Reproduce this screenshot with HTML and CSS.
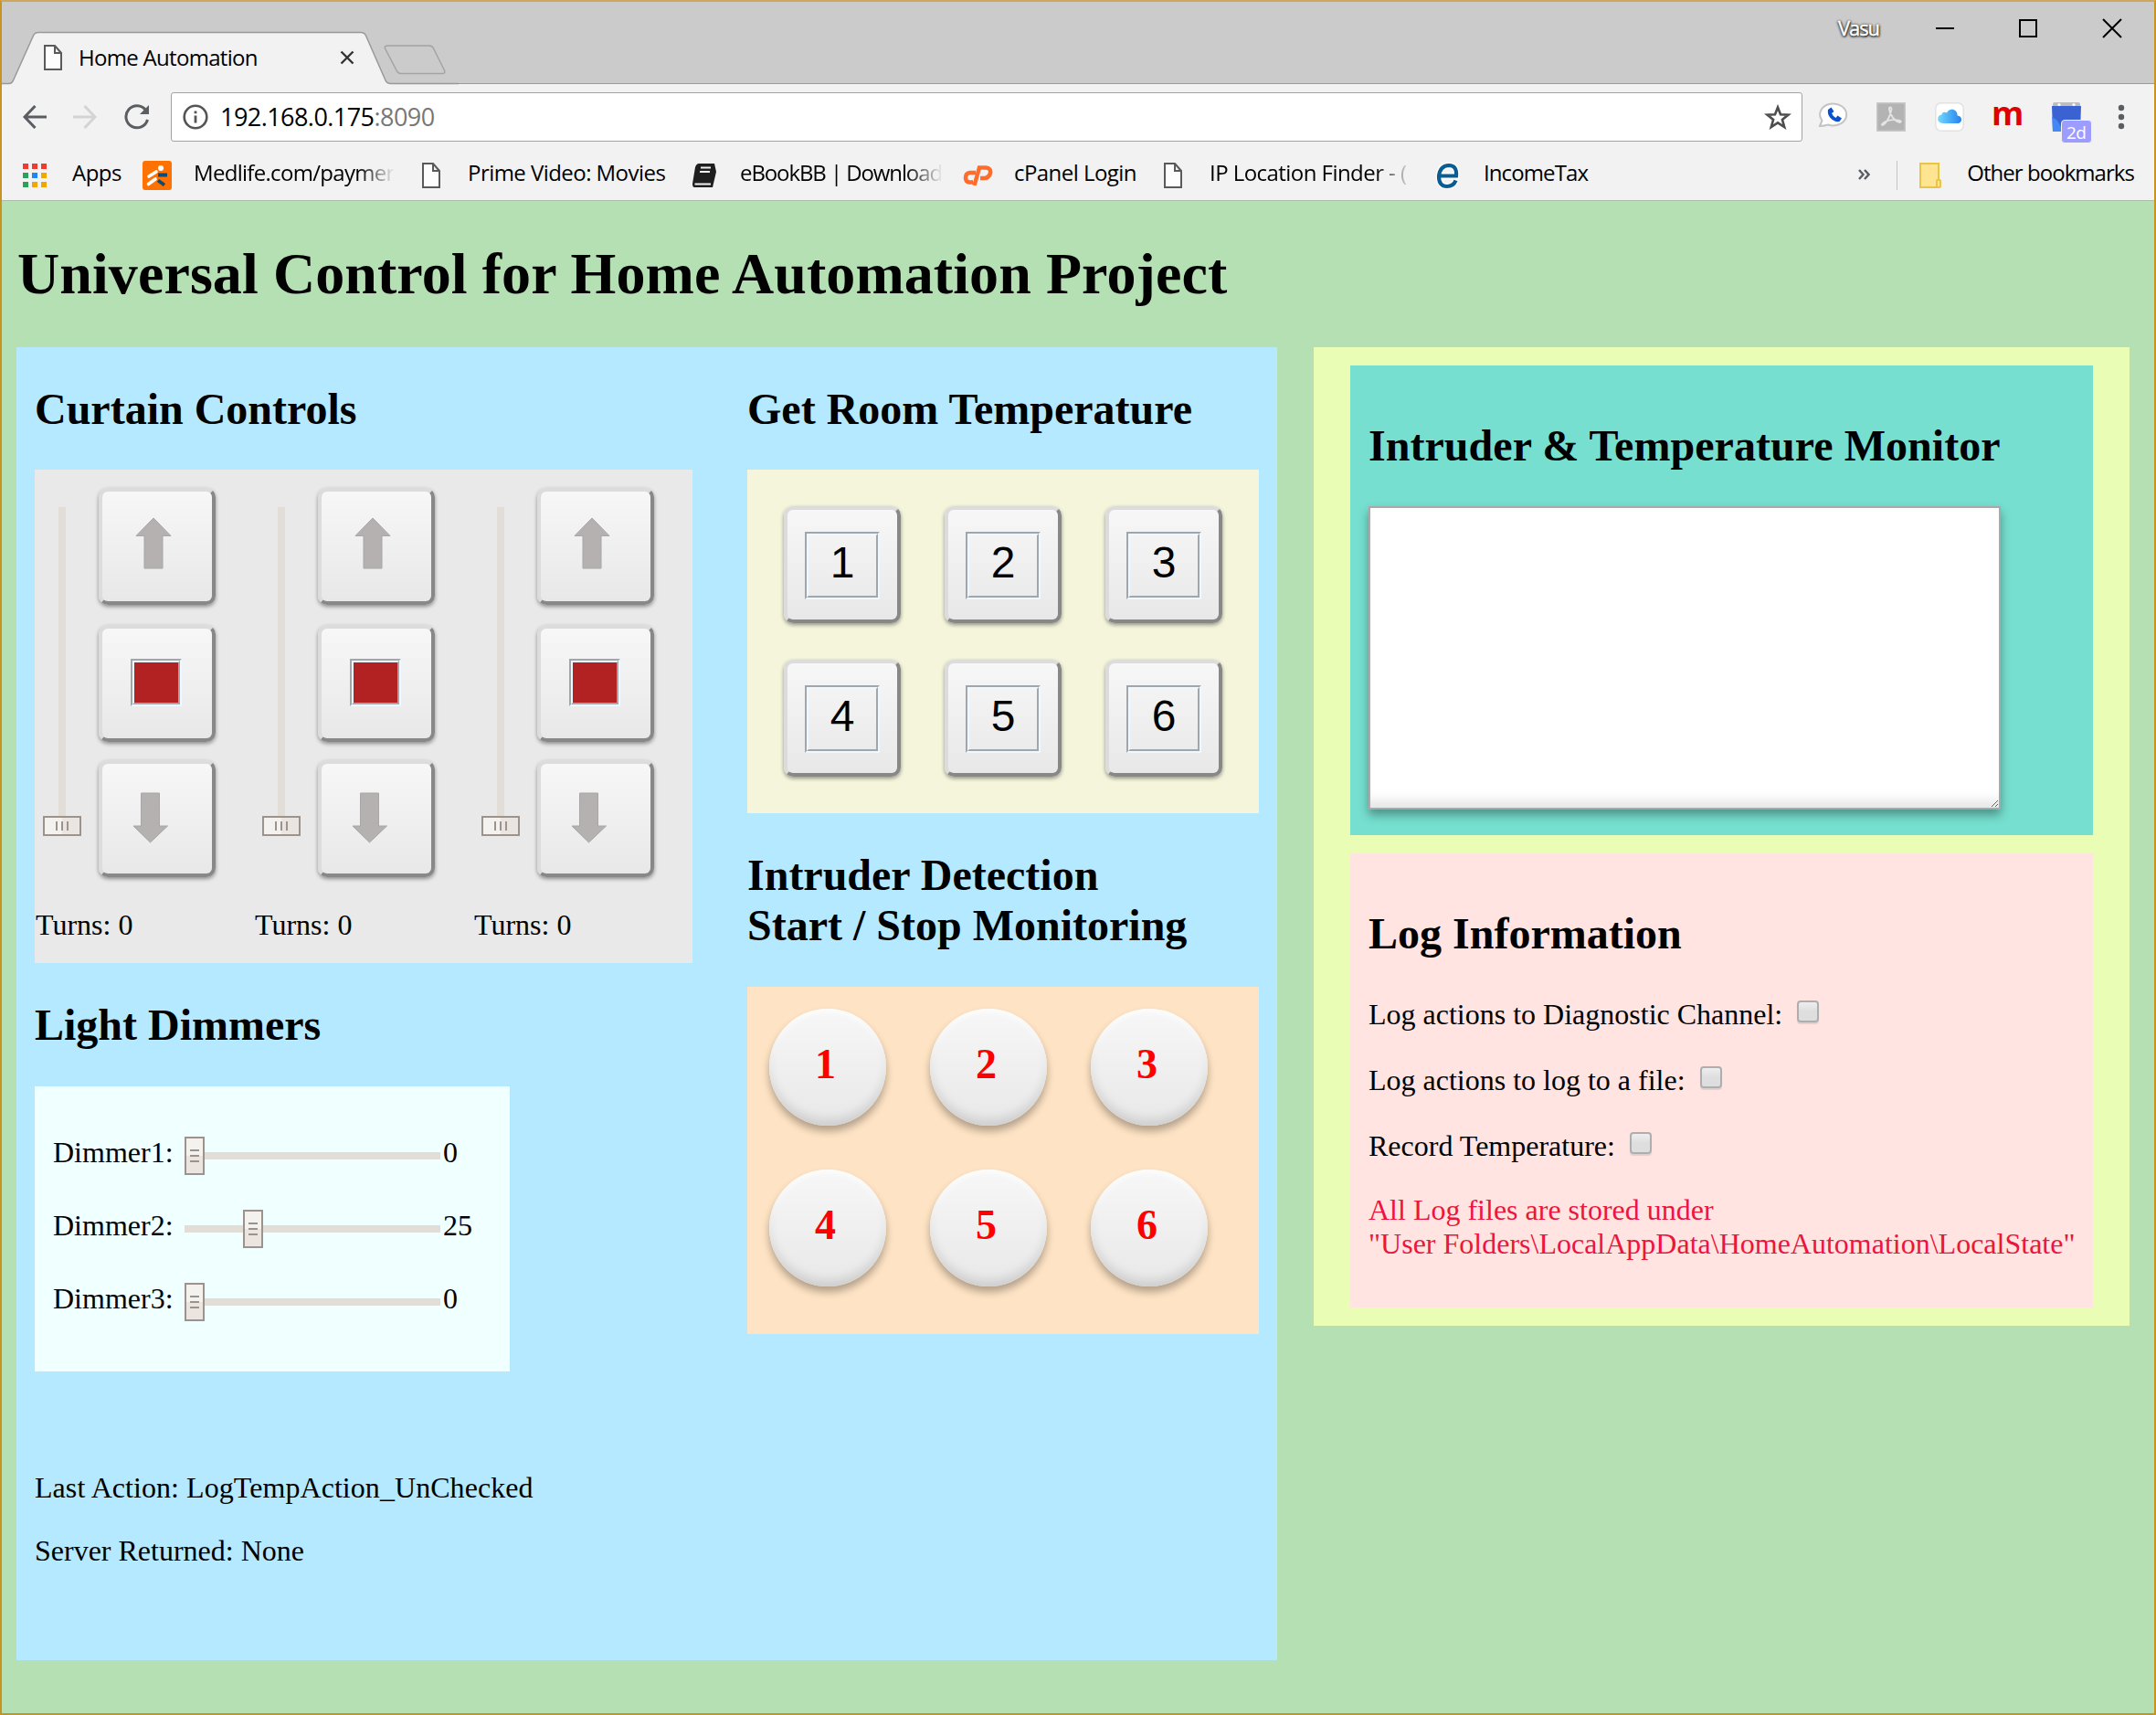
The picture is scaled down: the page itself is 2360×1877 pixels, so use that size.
FILE: index.html
```html
<!DOCTYPE html>
<html lang="en">
<head>
<meta charset="utf-8">
<title>Home Automation</title>
<link rel="stylesheet" href="styles.css">
</head>
<body>
<div class="window">
  <header class="browser">
    <div class="tabstrip">
      <svg class="tab-shape" width="500" height="60" viewBox="0 0 500 60">
        <path d="M0 57.5 H8 Q11 57.5 12 54 L34.500 5 Q36 1.500 40 1.500 H393 Q397 1.500 398.500 5 L420 54 Q421.500 57.500 426 57.500 H500 V60 H0 Z" fill="#f2f2f2"/>
        <path d="M0 57.500 H8 Q11 57.500 12.500 54 L34.500 5 Q36 1.500 40 1.500 H393 Q397 1.500 398.500 5 L420 54 Q421.500 57.500 426 57.500 H500" fill="none" stroke="#999" stroke-width="1.500"/>
        <path d="M423 16 H468 Q471 16 472.500 19 L484.500 43 Q486 46.500 482 46.500 H437 Q433.500 46.500 432 43 L419.500 19 Q418 16 423 16 Z" fill="#cbcbcb" stroke="#a3a3a3" stroke-width="1.500"/>
      </svg>
      <div class="tab">
        <svg class="doc" width="20" height="28" viewBox="0 0 20 28"><path d="M1 1 H12 L19 9 V27 H1 Z M12 1 V9 H19" fill="#fdfdfd" stroke="#5a5a5a" stroke-width="2"/></svg>
        <span class="tab-title">Home Automation</span>
        <svg class="tab-close" width="16" height="16" viewBox="0 0 16 16"><path d="M1.500 1.500 L14.500 14.500 M14.500 1.500 L1.500 14.500" stroke="#333" stroke-width="2.400"/></svg>
      </div>
      <div class="wincontrols">
        <span class="user">Vasu</span>
        <svg width="20" height="22" viewBox="0 0 20 22"><path d="M0 11 H20" stroke="#000" stroke-width="2"/></svg>
        <svg width="20" height="20" viewBox="0 0 20 20"><path d="M1 1 H19 V19 H1 Z" fill="none" stroke="#000" stroke-width="2"/></svg>
        <svg width="22" height="22" viewBox="0 0 22 22"><path d="M1 1 L21 21 M21 1 L1 21" stroke="#000" stroke-width="2"/></svg>
      </div>
    </div>

    <div class="toolbar">
      <svg class="back" width="26" height="26" viewBox="0 0 26 26"><path d="M13.500 1 L2 13 L13.500 25 M2 13 H26" fill="none" stroke="#5a5d61" stroke-width="3"/></svg>
      <svg class="fwd" width="26" height="26" viewBox="0 0 26 26"><path d="M12.500 1 L24 13 L12.500 25 M24 13 H0" fill="none" stroke="#d4d4d4" stroke-width="3"/></svg>
      <svg class="reload" width="28" height="28" viewBox="0 0 28 28"><path d="M23.500 6.500 A12 12 0 1 0 25.500 17" fill="none" stroke="#5a5d61" stroke-width="3"/><path d="M27 1 V11 H17 Z" fill="#5a5d61"/></svg>
      <div class="omnibox">
        <svg width="28" height="28" viewBox="0 0 28 28"><circle cx="14" cy="14" r="12.300" fill="none" stroke="#555" stroke-width="2.600"/><path d="M14 12.500 V20.500 M14 7.500 V10.300" stroke="#555" stroke-width="2.800"/></svg>
        <span class="url">192.168.0.175<span class="port">:8090</span></span>
        <svg class="star" width="30" height="29" viewBox="0 0 30 29"><path d="M15 3.500 L18 11.300 L26.500 11.600 L19.900 16.900 L22.200 25 L15 20.300 L7.800 25 L10.100 16.900 L3.500 11.600 L12 11.300 Z" fill="none" stroke="#4d4d4d" stroke-width="2.600"/></svg>
      </div>
      <svg class="ext phone" width="34" height="28" viewBox="0 0 34 28"><path d="M2 26 L4.500 20 A14.500 12 0 1 1 11 24.500 Q6 26 2 26 Z" fill="#fff" stroke="#c4c4c4" stroke-width="2"/><path d="M11 8 L14.500 5.500 L17.500 10 L15 12 Q16.500 15.500 19.500 17 L21.500 14.500 L26 17.500 L23.500 21 Q18 22 13.500 17 Q10 12.500 11 8 Z" fill="#0b50cc"/></svg>
      <svg class="ext pdf" width="32" height="32" viewBox="0 0 32 32"><rect x=".75" y=".75" width="30.500" height="30.500" fill="#b3b3b3" stroke="#c8c8c8" stroke-width="1.500"/><path d="M5.500 25 C8 20 16 18 26 20 M5.500 25 C10 26 15.500 14 16.500 7.500 C16.500 4.500 13.500 5 14 8 C15 14 20 21 25.500 22 Q28 21 26 20" fill="none" stroke="#e4e4e4" stroke-width="1.800"/></svg>
      <svg class="ext cloud" width="32" height="32" viewBox="0 0 32 32"><defs><linearGradient id="sky" x1="0" x2="1"><stop offset="0" stop-color="#74d8fd"/><stop offset="1" stop-color="#2382ee"/></linearGradient></defs><rect x=".75" y=".75" width="30.500" height="30.500" rx="6" fill="#fff" stroke="#e2e2e2" stroke-width="1.500"/><path d="M9 23 C1.500 23 1.500 14 7.500 13.500 C8 10 11.500 10.500 13 11.500 C15 5.500 25 6.500 24.500 14.500 C31 15 30 23 25 23 Z" fill="url(#sky)"/></svg>
      <span class="ext m">m</span>
      <div class="ext cal">
        <svg width="34" height="32" viewBox="0 0 34 32"><rect x="2" width="30" height="7" rx="2" fill="#bdbdbd"/><circle cx="9" cy="2.500" r="1.600" fill="#fff"/><circle cx="25" cy="2.500" r="1.600" fill="#fff"/><path d="M1 4 H33 L32 32 H2 Z" fill="#3a62d2"/><path d="M1.300 16 L7 20 L14 32 H2 Z" fill="#4389f5"/></svg>
        <span class="badge">2d</span>
      </div>
      <svg class="dots" width="8" height="28" viewBox="0 0 8 28"><g fill="#5a5d61"><circle cx="4" cy="4" r="3.200"/><circle cx="4" cy="14" r="3.200"/><circle cx="4" cy="24" r="3.200"/></g></svg>
    </div>

    <nav class="bookmarks">
      <div class="bm bm-apps">
        <svg width="26" height="26" viewBox="0 0 26 26"><path d="M0 0h6v6H0zM10 0h6v6h-6zM20 0h6v6h-6z" fill="#f23b30"/><path d="M0 10h6v6H0zM0 20h6v6H0z" fill="#2ba25a"/><path d="M10 10h6v6h-6z" fill="#1f87f5"/><path d="M20 10h6v6h-6zM10 20h6v6h-6zM20 20h6v6h-6z" fill="#f2a600"/></svg>
        <span>Apps</span>
      </div>
      <div class="bm bm-med">
        <svg width="32" height="32" viewBox="0 0 32 32"><rect width="32" height="32" rx="3" fill="#ff7100"/><circle cx="20" cy="8" r="3" fill="#fff"/><path d="M15 12 L7 17 M14 20 L6.500 25.500" stroke="#fff" stroke-width="3.600" stroke-linecap="round"/><path d="M17 15.500 H27 M17 21.500 L24 26.500" stroke="#12496f" stroke-width="3.800"/></svg>
        <span class="fade">Medlife.com/paymer</span>
      </div>
      <div class="bm bm-prime">
        <svg width="20" height="28" viewBox="0 0 20 28"><path d="M1 1 H12 L19 9 V27 H1 Z M12 1 V9 H19" fill="#fdfdfd" stroke="#5a5a5a" stroke-width="2"/></svg>
        <span>Prime Video: Movies</span>
      </div>
      <div class="bm bm-book">
        <svg width="26" height="26" viewBox="0 0 26 26"><path d="M7 0 H24 L26 9 L22 26 H2 Q0 26 0 22 L3 4 Q4 0 7 0 Z" fill="#1f1f1f"/><path d="M9 4.500 H20 M8 9 H19 M2.500 22.500 H20" stroke="#f2f2f2" stroke-width="2"/></svg>
        <span class="fade">eBookBB | Download</span>
      </div>
      <div class="bm bm-cp">
        <svg width="33" height="22" viewBox="0 0 33 22"><g fill="none" stroke="#ff6c2c" stroke-width="4.500"><path d="M14 8 H8 Q3 8.500 3 13.500 Q3 18 7 18.500 H11"/><path d="M12.500 22 L18 2.500 H25 Q31 3 30 8.500 Q28.500 13.500 24 14 H19"/></g></svg>
        <span>cPanel Login</span>
      </div>
      <div class="bm bm-ip">
        <svg width="20" height="28" viewBox="0 0 20 28"><path d="M1 1 H12 L19 9 V27 H1 Z M12 1 V9 H19" fill="#fdfdfd" stroke="#5a5a5a" stroke-width="2"/></svg>
        <span class="fade">IP Location Finder - (</span>
      </div>
      <div class="bm bm-tax">
        <svg width="28" height="30" viewBox="0 0 28 30"><path d="M6 16 H23 Q24 4 15 4 Q5 4.500 4 16 Q4 27 13 27 Q20 27 22.500 20.500" fill="none" stroke="#fff" stroke-width="7"/><path d="M6 15.500 H23 Q24 4 15 4 Q5 4.500 4 16 Q4 27 13 27 Q20 27 22.500 20.500" fill="none" stroke="#0a5c93" stroke-width="4.200"/></svg>
        <span>IncomeTax</span>
      </div>
      <svg class="more" width="13" height="12" viewBox="0 0 13 12"><path d="M1 1 L5.500 6 L1 11 M7 1 L11.500 6 L7 11" fill="none" stroke="#5a5d61" stroke-width="2.400"/></svg>
      <div class="bm bm-other">
        <svg width="24" height="28" viewBox="0 0 24 28"><path d="M1 1 H21 V27 H1 Z" fill="#ffe592" stroke="#e9c445" stroke-width="2"/><rect x="19" y="19" width="4" height="8" rx="1" fill="#ffe592" stroke="#e9c445" stroke-width="2"/></svg>
        <span>Other bookmarks</span>
      </div>
    </nav>
  </header>

  <main class="page">
    <h1>Universal Control for Home Automation Project</h1>
    <div class="columns">
      <section class="controls">
        <div class="col-a">
          <h2>Curtain Controls</h2>
          <div class="curtains">
            <div class="curtain">
              <div class="vslider"><i class="vtrack"></i><i class="vthumb"></i></div>
              <div class="stack">
                <button class="key"><svg width="128" height="128" viewBox="0 0 128 128"><path d="M60 33 L79 52.500 H70 V88 H50 V52.500 H41 Z" class="arrow"/></svg></button>
                <button class="key"><i class="stop"></i></button>
                <button class="key"><svg width="128" height="128" viewBox="0 0 128 128"><path d="M56.500 90 L75.500 72 H66.500 V36 H46.500 V72 H38 Z" class="arrow"/></svg></button>
              </div>
              <p class="turns">Turns: 0</p>
            </div>
            <div class="curtain">
              <div class="vslider"><i class="vtrack"></i><i class="vthumb"></i></div>
              <div class="stack">
                <button class="key"><svg width="128" height="128" viewBox="0 0 128 128"><path d="M60 33 L79 52.500 H70 V88 H50 V52.500 H41 Z" class="arrow"/></svg></button>
                <button class="key"><i class="stop"></i></button>
                <button class="key"><svg width="128" height="128" viewBox="0 0 128 128"><path d="M56.500 90 L75.500 72 H66.500 V36 H46.500 V72 H38 Z" class="arrow"/></svg></button>
              </div>
              <p class="turns">Turns: 0</p>
            </div>
            <div class="curtain">
              <div class="vslider"><i class="vtrack"></i><i class="vthumb"></i></div>
              <div class="stack">
                <button class="key"><svg width="128" height="128" viewBox="0 0 128 128"><path d="M60 33 L79 52.500 H70 V88 H50 V52.500 H41 Z" class="arrow"/></svg></button>
                <button class="key"><i class="stop"></i></button>
                <button class="key"><svg width="128" height="128" viewBox="0 0 128 128"><path d="M56.500 90 L75.500 72 H66.500 V36 H46.500 V72 H38 Z" class="arrow"/></svg></button>
              </div>
              <p class="turns">Turns: 0</p>
            </div>
          </div>

          <h2 class="dim-title">Light Dimmers</h2>
          <div class="dimmers">
            <div class="dimmer"><span class="name">Dimmer1:</span><div class="hslider"><i class="hthumb" style="margin-left:0"></i></div><span>0</span></div>
            <div class="dimmer"><span class="name">Dimmer2:</span><div class="hslider"><i class="hthumb" style="margin-left:64px"></i></div><span>25</span></div>
            <div class="dimmer"><span class="name">Dimmer3:</span><div class="hslider"><i class="hthumb" style="margin-left:0"></i></div><span>0</span></div>
          </div>

          <p class="status first">Last Action: LogTempAction_UnChecked</p>
          <p class="status">Server Returned: None</p>
        </div>

        <div class="col-b">
          <h2>Get Room Temperature</h2>
          <div class="temps">
            <button class="key"><span class="num">1</span></button>
            <button class="key"><span class="num">2</span></button>
            <button class="key"><span class="num">3</span></button>
            <button class="key"><span class="num">4</span></button>
            <button class="key"><span class="num">5</span></button>
            <button class="key"><span class="num">6</span></button>
          </div>
          <h2 class="two-line">Intruder Detection<br>Start / Stop Monitoring</h2>
          <div class="rounds">
            <button class="round">1</button>
            <button class="round">2</button>
            <button class="round">3</button>
            <button class="round">4</button>
            <button class="round">5</button>
            <button class="round">6</button>
          </div>
        </div>
      </section>

      <aside class="side">
        <section class="monitor">
          <h2>Intruder &amp; Temperature Monitor</h2>
          <textarea class="output"></textarea>
        </section>
        <section class="log">
          <h2>Log Information</h2>
          <label class="opt">Log actions to Diagnostic Channel:<input type="checkbox"></label>
          <label class="opt">Log actions to log to a file:<input type="checkbox"></label>
          <label class="opt">Record Temperature:<input type="checkbox"></label>
          <p class="note">All Log files are stored under<br>"User Folders\LocalAppData\HomeAutomation\LocalState"</p>
        </section>
      </aside>
    </div>
  </main>
</div>
</body>
</html>
```
FILE: styles.css
```css
* { box-sizing: border-box; }
body { margin: 0; }
h1, h2, p { margin: 0; font-weight: normal; }
svg { display: block; flex: none; }
i { display: block; }

.window {
  width: 2360px;
  height: 1877px;
  border: 2px solid #c79422;
  border-top-color: #cfa75c;
  background: #b4e0b4;
  font-family: "Liberation Serif", "Times New Roman", serif;
  font-size: 32px;
  color: #000;
  overflow: hidden;
}

/* browser chrome */
.browser {
  height: 218px;
  background: #f2f2f2;
  border-bottom: 1px solid #b4b6b4;
  font-family: "Open Sans", "Noto Sans", sans-serif;
  font-size: 24px;
  letter-spacing: -.55px;
}
.tabstrip {
  position: relative;
  display: flex;
  justify-content: space-between;
  height: 90px;
  background: #cbcbcb;
  border-bottom: 1px solid #999;
}
.tab-shape { position: absolute; left: 0; top: 32px; }
.tab {
  position: relative;
  display: flex;
  align-items: center;
  width: 400px;
  padding: 33px 0 0 46px;
}
.tab-title { margin-left: 18px; width: 241px; letter-spacing: -.7px; white-space: nowrap; line-height: 34px; }
.tab-close { margin-left: 45px; }
.wincontrols { display: flex; align-items: center; height: 58px; padding-right: 35px; }
.wincontrols svg:nth-of-type(2) { margin-left: 71px; }
.wincontrols svg:nth-of-type(3) { margin-left: 71px; }
.user {
  margin-right: 62px;
  padding-bottom: 3px;
  color: #fff;
  font-size: 22px;
  letter-spacing: -1.1px;
  -webkit-text-stroke: .4px #fff;
  text-shadow: 0 0 3px #222, 0 1px 3px #222, 1px 1px 2px #333;
}

.toolbar { display: flex; align-items: center; height: 72px; padding: 0 0 0 23px; }
.fwd { margin-left: 29px; }
.reload { margin-left: 30px; }
.omnibox {
  display: flex;
  align-items: center;
  width: 1786px;
  height: 54px;
  margin-left: 23px;
  padding: 0 11px 0 12px;
  background: #fff;
  border: 1px solid #a3a3a3;
  border-radius: 3px;
}
.url { margin-left: 13px; padding-bottom: 1px; font-size: 27px; letter-spacing: -.55px; line-height: 40px; }
.port { color: #777; }
.star { margin-left: auto; }
.phone { margin: -5px 0 0 17px; }
.pdf { margin-left: 30px; }
.cloud { margin-left: 32px; }
.m {
  width: 34px;
  margin: -9px 0 0 30px;
  font: bold 36px/40px "Open Sans", sans-serif;
  color: #e00000;
}
.cal { position: relative; margin-left: 31px; }
.badge {
  position: absolute;
  left: 11px;
  top: 19px;
  width: 34px;
  height: 26px;
  border: 1px solid #f2f2f2;
  border-radius: 4px;
  background: #9d9dff;
  color: #fff;
  font-size: 19px;
  line-height: 27px;
  padding-left: 5px;
}
.dots { margin-left: 39px; }

.bookmarks { display: flex; align-items: center; height: 55px; padding-top: 1px; }
.bm { display: flex; align-items: center; flex: none; white-space: nowrap; line-height: 36px; }
.bm span { padding-bottom: 6px; }
.bm-apps { width: 131px; margin-left: 23px; }
.bm-apps span { margin-left: 28px; }
.bm-med { width: 306px; }
.bm-med span { margin-left: 24px; width: 220px; }
.bm-prime { width: 296px; }
.bm-prime span { margin-left: 30px; }
.bm-book { width: 296px; }
.bm-book span { margin-left: 26px; width: 222px; letter-spacing: -1.1px; }
.bm-cp { width: 220px; }
.bm-cp span { margin-left: 23px; }
.bm-ip { width: 297px; }
.bm-ip span { margin-left: 30px; width: 222px; }
.bm-tax span { margin-left: 25px; letter-spacing: -.9px; }
.more { margin: 0 0 2px auto; }
.bm-other { margin: 0 22px 0 29px; padding-left: 24px; border-left: 1px solid #c4c4c4; height: 32px; }
.bm-other span { margin-left: 28px; letter-spacing: -.95px; }
.bm-med .fade { letter-spacing: -.7px; }
.fade {
  overflow: hidden;
  -webkit-mask-image: linear-gradient(90deg, #000 82%, transparent);
  mask-image: linear-gradient(90deg, #000 82%, transparent);
}

/* page */
.page { padding: 43px 16px 0; }
h1 { margin: 0 0 43px 1px; font-size: 64px; font-weight: bold; line-height: 74px; letter-spacing: .08px; }
h2 { font-size: 48px; font-weight: bold; line-height: 56px; padding: 40px 0 38px; white-space: nowrap; }
.two-line { line-height: 55px; padding-bottom: 40px; }
.dim-title { padding-bottom: 39px; }
.columns { display: flex; align-items: flex-start; gap: 40px; }
.controls {
  display: flex;
  gap: 60px;
  width: 1380px;
  height: 1437px;
  padding: 0 20px;
  background: #b4e9ff;
}
.col-a { width: 720px; }
.col-b { width: 560px; }

button { font: inherit; padding: 0; display: block; }
.key {
  width: 128px;
  height: 128px;
  border: 4px solid;
  border-color: #dcdcdc #888 #888 #dcdcdc;
  border-radius: 10px;
  background: linear-gradient(#f7f7f7, #e8e8e8);
  box-shadow: 0 2px 4px rgba(0, 0, 0, .4);
}
.key svg { margin: -4px; }
.arrow { fill: #b5b1b0; stroke: #a8a6a6; stroke-width: 1; }
.stop {
  width: 56px;
  height: 52px;
  margin: -2px 0 0 31px;
  border: 4px groove aliceblue;
  background: #b22222;
}

.curtains { display: grid; grid-template-columns: repeat(3, 240px); height: 540px; background: #e9e9e9; }
.curtain { display: grid; grid-template-columns: 70px 1fr; align-content: start; }
.vslider { display: flex; flex-direction: column; align-items: center; width: 42px; height: 360px; margin: 41px 0 0 9px; }
.vtrack { width: 8px; flex: 1; background: #e2ddd7; }
.vthumb {
  width: 42px;
  height: 22px;
  border: 2px solid #9c948c;
  background:
    linear-gradient(90deg, #9c948c 2px, transparent 2px 6px, #9c948c 6px 8px, transparent 8px 12px, #9c948c 12px) 12px 4px / 14px 10px no-repeat,
    linear-gradient(90deg, #f4f2ef 50%, #eae5e1 50%);
}
.stack { display: flex; flex-direction: column; gap: 22px; padding-top: 20px; }
.stack .key:last-child { margin-top: -2px; }
.turns { grid-column: 1 / 3; margin-top: 34px; padding-left: 1px; line-height: 36px; }

.dimmers { width: 520px; height: 312px; padding: 54px 20px 0; background: azure; }
.dimmer { display: flex; height: 80px; line-height: 36px; }
.dimmer > span { flex: none; }
.name { width: 144px; }
.hslider {
  width: 280px;
  height: 42px;
  margin: 1px 3px 0 0;
  background: linear-gradient(#e2ddd7, #e2ddd7) 0 17px / 280px 8px no-repeat;
}
.hthumb {
  width: 22px;
  height: 42px;
  border: 2px solid #9c948c;
  background:
    linear-gradient(#9c948c 2px, transparent 2px 6px, #9c948c 6px 8px, transparent 8px 12px, #9c948c 12px) 4px 12px / 10px 14px no-repeat,
    linear-gradient(#f4f2ef 50%, #eae5e1 50%);
}
.status { line-height: 36px; margin-top: 33px; white-space: nowrap; }
.status.first { margin-top: 109px; letter-spacing: .06px; }

.temps {
  display: grid;
  grid-template-columns: repeat(3, 128px);
  gap: 40px 48px;
  height: 376px;
  padding: 40px;
  align-content: start;
  background: beige;
}
.num {
  display: block;
  width: 82px;
  height: 74px;
  margin: 2px 0 0 19px;
  border: 4px groove aliceblue;
  font: 48px/60px "Liberation Sans", Arial, sans-serif;
  color: #000;
  text-align: center;
}
.rounds {
  display: grid;
  grid-template-columns: repeat(3, 128px);
  gap: 48px;
  height: 380px;
  padding: 24px;
  align-content: start;
  background: #fee3c4;
}
.round {
  width: 128px;
  height: 128px;
  border: 0;
  border-radius: 50%;
  padding: 0 5px 7px 0;
  background: linear-gradient(#f7f7f7, #e8e8e8);
  box-shadow: 0 6px 8px rgba(0, 0, 0, .3), inset 0 -8px 12px -2px rgba(0, 0, 0, .12), inset 0 4px 6px rgba(255, 255, 255, .7);
  font-weight: bold;
  font-size: 46px;
  color: #f00;
}

.side { width: 893px; height: 1071px; padding: 20px 40px; background: #e9feb4; }
.monitor { height: 514px; padding: 20px; background: #76dfcf; }
.monitor h2 { letter-spacing: .05px; }
.output {
  display: block;
  width: 692px;
  height: 332px;
  margin: 0;
  border: 2px solid #a9a9a9;
  background: #fff;
  box-shadow: 0 6px 10px rgba(0, 0, 0, .35), inset 0 -18px 12px -10px rgba(0, 0, 0, .1);
}
.log { height: 497px; margin-top: 20px; padding: 20px; background: #ffe4e1; }
.opt { display: flex; height: 36px; line-height: 36px; margin: 4px 0 36px; white-space: nowrap; }
.opt + .opt { margin-top: 0; }
.opt input {
  appearance: none;
  width: 24px;
  height: 24px;
  margin: 3px 0 0 16px;
  border: 2px solid #acaeb0;
  border-radius: 4px;
  background: linear-gradient(#eee, #dedede 50%);
  box-shadow: 0 2px 1px rgba(0, 0, 0, .1);
}
.note { margin-top: -2px; line-height: 37px; color: #ed143d; white-space: nowrap; }
```
